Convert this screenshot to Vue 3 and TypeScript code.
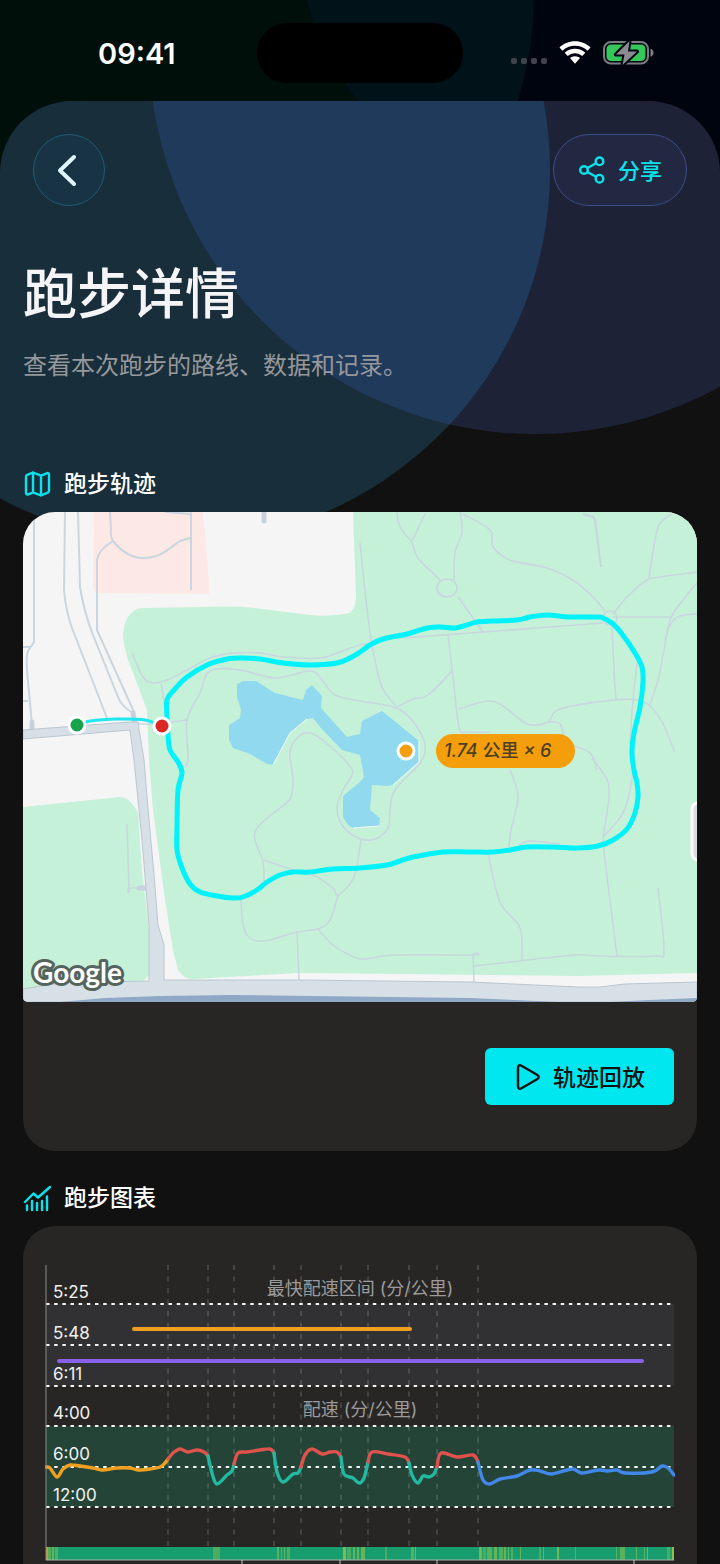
<script setup lang="ts">
type Point = [number, number]

function parse(list: string): Point[] {
  return list
    .trim()
    .split(/\s+/)
    .map((pair) => pair.split(',').map(Number) as Point)
}

/** Catmull-Rom curve through the listed points, as SVG cubic segments. */
function smooth(list: string, closed = false): string {
  const p = parse(list)
  const n = p.length
  const at = (i: number): Point => (closed ? p[(i + n) % n] : p[Math.max(0, Math.min(n - 1, i))])
  let d = `M${p[0][0]} ${p[0][1]}`
  const last = closed ? n : n - 1
  for (let i = 0; i < last; i++) {
    const [a, b, c, e] = [at(i - 1), at(i), at(i + 1), at(i + 2)]
    d += `C${b[0] + (c[0] - a[0]) / 6} ${b[1] + (c[1] - a[1]) / 6} ${c[0] - (e[0] - b[0]) / 6} ${c[1] - (e[1] - b[1]) / 6} ${c[0]} ${c[1]}`
  }
  return closed ? d + 'Z' : d
}

const trails = [
  '132,653 143,677 153,683 167,680 187,670 210,658 233,653 260,653 283,657 320,658 345,650 360,645 375,644',
  '161,683 163,695 166,712',
  '138,724 165,724',
  '170,722 188,720',
  '186,767 188,755 187,720 200,693 210,671 240,670 275,678 310,671 322,680 335,695 360,701 380,704 400,710 415,724 425,745 420,763 395,790 390,810 388,828 375,839 358,838 342,825 337,807 343,790 352,775 349,765 325,742 310,733 298,737 290,752 293,780 290,799 272,814 257,828 255,840 263,862 264,882',
  '264,860 290,869 313,875 333,888 338,895 354,877 361,840',
  '338,895 330,920 318,929 297,932 265,941 250,938 243,925 241,900',
  '297,932 299,980',
  '318,929 333,945 360,959 393,955 473,955 473,955 474,983',
  '474,966 520,961 575,955 600,956 655,956 664,950 658,888',
  '488,853 500,902 520,928 522,960',
  '603,835 605,860 617,956',
  '510,770 518,797 511,830 509,847',
  '592,758 608,782 608,805 603,837',
  '632,765 632,780 623,813 603,837',
  '519,845 530,841 560,844',
  '360,543 366,600 372,645 382,687 397,707',
  '397,707 413,699 428,695 452,671',
  '448,635 453,677 459,727 467,732 490,732',
  '459,709 487,701 503,706 527,724 548,722 560,709 613,700 637,700 650,706 662,722 675,752',
  '548,722 560,724 567,742 590,753 597,770',
  '403,638 483,632 603,623',
  '612,624 614,670 616,700',
  '638,655 634,690 632,712 630,745',
  '397,512 400,527 412,543 418,558 440,580',
  '425,514 412,541',
  '460,512 462,532 455,553 454,580',
  '458,597 483,632',
  '463,514 490,530 493,547 510,560 547,568 573,580 593,597 605,611',
  '672,514 660,523 655,540 649,578',
  '697,572 660,577 647,580 627,597 613,614',
  '613,617 672,617',
  '697,583 683,600 670,620 664,650 658,680 650,705',
  '697,614 680,616 670,625 665,640',
  '127,824 129,888 129,888 146,888',
].map((t) => smooth(t))

const streets = [
  'M34 512V642L28 651Q26 655 27 670L32 725',
  'M23 647H31',
  'M23 701H28',
  'M65 512L64 590Q66 612 72 628L107 718',
  'M78 512L80 587Q84 612 93 635L118 697Q121 706 133 713',
  'M113 541Q98 550 97 560V630L134 712',
  'M110 512L111 530Q110 536 113 541C122 552 131 558 143 558C163 558 171 546 180 541L190 538',
  'M191 512V590',
  'M165 512L191 514',
]

const loop = smooth(
  '167,718 167,700 174,690 187,677 207,665 227,659 243,658 260,659 283,663 310,665 337,663 350,658 360,652 370,645 383,639 407,634 427,628 441,627 455,628 467,625 477,622 493,621 517,620 530,617 547,615 570,617 597,617 603,618 612,623 622,634 635,653 642,667 643,682 640,707 634,733 632,753 634,770 637,783 638,797 635,813 627,829 613,840 598,846 577,848 553,847 527,847 510,850 493,852 470,852 443,852 413,857 400,861 387,865 360,868 333,869 310,872 293,872 280,875 267,882 257,890 243,897 233,898 217,896 200,892 190,884 182,868 177,850 177,827 178,790 182,773 178,762 170,750 168,735',
  true,
)
const approach = smooth('77,725 90,721 117,719 145,720 162,726')

const lake =
  '237,684 243,681 256,681 275,693 303,700 306,690 312,685 322,696 321,708 347,737 360,734 362,721 382,711 419,741 419,762 393,785 387,786 372,785 370,810 380,818 379,826 353,828 348,825 343,817 343,796 360,782 364,777 360,755 342,750 320,727 313,718 307,719 290,733 273,765 267,764 250,754 233,748 229,740 229,725 240,718 241,710 237,697'

const pace = [
  { color: '#f0a020', pts: '46,1467 50,1468 57,1477 63,1469 70,1465 80,1466 93,1468 102,1470 117,1468 130,1468 138,1470 150,1469 160,1467 165,1463 168,1459' },
  { color: '#e0524c', pts: '168,1459 173,1453 180,1449 188,1452 197,1450 204,1452 208,1456' },
  { color: '#22b8a2', pts: '208,1456 212,1473 217,1484 227,1475 232,1471 234,1464' },
  { color: '#e0524c', pts: '234,1464 238,1453 247,1452 260,1450 270,1449 274,1453' },
  { color: '#22b8a2', pts: '274,1453 277,1472 283,1482 293,1474 298,1473 301,1467' },
  { color: '#e0524c', pts: '301,1467 305,1455 312,1449 322,1454 330,1452 337,1452 341,1457' },
  { color: '#22b8a2', pts: '341,1457 344,1474 353,1478 359,1483 364,1478 368,1462' },
  { color: '#e0524c', pts: '368,1462 372,1452 388,1454 405,1457 409,1463' },
  { color: '#22b8a2', pts: '409,1463 412,1475 418,1483 423,1476 429,1477 434,1474 437,1467' },
  { color: '#e0524c', pts: '437,1467 441,1453 457,1457 473,1455 478,1462' },
  { color: '#4287ea', pts: '478,1462 483,1480 490,1484 500,1479 517,1476 530,1470 540,1471 552,1474 572,1469 582,1473 598,1470 608,1471 617,1470 625,1473 652,1472 662,1466 668,1468 674,1475' },
].map((s) => ({ color: s.color, d: smooth(s.pts) }))

const gridLines = [1304, 1345, 1386, 1426, 1467, 1507]
const yLabels = [
  { text: '5:25', y: 1298 },
  { text: '5:48', y: 1339 },
  { text: '6:11', y: 1380 },
  { text: '4:00', y: 1419 },
  { text: '6:00', y: 1460 },
  { text: '12:00', y: 1501 },
]
const lapLines = [168, 208, 234, 274, 301, 341, 368, 409, 437, 478]
const ticks = [242, 340, 437, 634]

const stripes: { x: number; w: number; o: number }[] = [
  { x: 48, w: 3, o: 0.45 }, { x: 52, w: 2, o: 0.6 }, { x: 55, w: 3, o: 0.45 },
  { x: 213, w: 7, o: 0.4 }, { x: 277, w: 2, o: 0.5 }, { x: 281, w: 1, o: 0.5 },
  { x: 284, w: 1, o: 0.6 }, { x: 287, w: 3, o: 0.4 }, { x: 343, w: 3, o: 0.8 },
  { x: 347, w: 4, o: 0.4 }, { x: 353, w: 2, o: 0.6 }, { x: 357, w: 2, o: 0.6 },
  { x: 361, w: 4, o: 0.6 }, { x: 385, w: 2, o: 0.4 }, { x: 411, w: 3, o: 0.5 },
  { x: 415, w: 1, o: 0.7 }, { x: 479, w: 3, o: 0.7 }, { x: 483, w: 3, o: 0.4 },
  { x: 487, w: 5, o: 0.5 }, { x: 494, w: 3, o: 0.6 }, { x: 499, w: 4, o: 0.45 },
  { x: 504, w: 2, o: 0.6 }, { x: 508, w: 1, o: 0.6 }, { x: 511, w: 2, o: 0.4 },
  { x: 520, w: 1, o: 0.6 }, { x: 539, w: 2, o: 0.4 }, { x: 543, w: 1, o: 0.6 },
  { x: 557, w: 2, o: 0.7 }, { x: 575, w: 1, o: 0.5 }, { x: 616, w: 1, o: 0.5 },
  { x: 620, w: 5, o: 0.5 }, { x: 636, w: 1, o: 0.6 }, { x: 644, w: 1, o: 0.5 },
  { x: 647, w: 1, o: 0.7 }, { x: 667, w: 3, o: 0.4 }, { x: 672, w: 2, o: 0.9 },
]
</script>

<template>
  <div class="screen">
    <svg class="backdrop" viewBox="0 0 720 101" aria-hidden="true">
      <defs>
        <clipPath id="back-clip"><circle cx="198" cy="-3" r="336" /></clipPath>
      </defs>
      <circle cx="198" cy="-3" r="336" fill="#000f09" />
      <circle cx="637" cy="-104" r="347" fill="#00040f" />
      <rect x="620" width="100" height="101" fill="#00040f" />
      <circle cx="637" cy="-104" r="347" fill="#021219" clip-path="url(#back-clip)" />
    </svg>

    <header class="status">
      <time class="clock">09:41</time>
      <span class="island"></span>
      <div class="indicators">
        <span class="dots"><i v-for="n in 4" :key="n"></i></span>
        <svg class="wifi" viewBox="0 0 32 23" role="img" aria-label="Wi-Fi">
          <path d="M16 0.3C22.1 0.3 27.6 2.7 31.5 6.5L28.5 9.8C25.2 6.6 20.8 4.8 16 4.8S6.8 6.6 3.5 9.8L.5 6.5C4.4 2.7 9.9.3 16 .3Z" />
          <path d="M16 7.7c4 0 7.6 1.5 10.3 4.1l-3.1 3.3c-1.9-1.8-4.4-2.9-7.2-2.9s-5.3 1.1-7.2 2.9l-3.1-3.3C8.4 9.2 12 7.7 16 7.7Z" />
          <path d="M16 15.2c2 0 3.7.7 5 1.9L16 22.7l-5-5.6c1.3-1.2 3-1.9 5-1.9Z" />
        </svg>
        <svg class="battery" viewBox="0 0 51 26" role="img" aria-label="正在充电">
          <rect x="1" y="2" width="44" height="21.5" rx="7" fill="none" stroke="#7b7d82" stroke-width="2" />
          <rect x="3.5" y="4.5" width="39" height="16.5" rx="4.5" fill="#35c759" />
          <path d="M47.5 8.8c2 .6 3 2 3 4s-1 3.4-3 4Z" fill="#7b7d82" />
          <path d="M26.5 1L13 14.5h8.5L19.5 25L34 11.5h-9Z" fill="#8b8c92" stroke="#00040f" stroke-width="4" stroke-linejoin="round" paint-order="stroke" />
        </svg>
      </div>
    </header>

    <main class="sheet">
      <svg class="glow" viewBox="0 0 720 463" aria-hidden="true">
        <defs>
          <clipPath id="glow-clip"><circle cx="177" cy="69" r="373" /></clipPath>
        </defs>
        <circle cx="177" cy="69" r="373" fill="#182e3a" />
        <circle cx="535" cy="-53" r="386" fill="#1e2236" />
        <circle cx="535" cy="-53" r="386" fill="#203a5b" clip-path="url(#glow-clip)" />
      </svg>

      <nav class="toolbar">
        <button class="back" type="button" aria-label="返回">
          <svg viewBox="0 0 22 34" aria-hidden="true"><path d="M18 4L4 17.5L18 31" /></svg>
        </button>
        <button class="share" type="button">
          <svg viewBox="0 0 26 28" aria-hidden="true">
            <circle cx="5" cy="14" r="3.8" />
            <circle cx="20.5" cy="5.3" r="3.8" />
            <circle cx="20.5" cy="22.7" r="3.8" />
            <path d="M8.5 12L17 7.2M8.5 16L17 20.8" />
          </svg>
          <span>分享</span>
        </button>
      </nav>

      <div class="intro">
        <h1>跑步详情</h1>
        <p>查看本次跑步的路线、数据和记录。</p>
      </div>

      <section class="block">
        <h2>
          <svg class="section-icon" viewBox="0 0 28 28" aria-hidden="true">
            <path d="M10 2.5L4.2 4.9Q3 5.4 3 6.8V22.5Q3 25.2 5.4 24.3L10 22.3L18 25.5L24.8 22.7Q26 22.2 26 20.8V5Q26 2.3 23.6 3.3L18 5.7ZM10 2.5V22.3M18 5.7V25.5" />
          </svg>
          跑步轨迹
        </h2>
        <div class="card map-card">
          <svg class="map" viewBox="23 512 674 490" role="img" aria-label="跑步轨迹地图">
            <rect x="23" y="512" width="674" height="490" fill="#f6f5f6" />
            <path d="M94 512H203L205 535L209 583V594L98 593Q93 592 93 585Z" fill="#fce8e5" />
            <path d="M353 512L356 595Q356 613 345 614Q325 617 310 615L245 607Q225 606 200 607L142 608Q125 610 123 635Q124 650 130 665L147 710L149 760L153 810L165 900L173 950L178 970Q184 979 192 979L300 973L400 974L580 976L697 973V512Z" fill="#c5f1d8" />
            <path d="M23 807L120 797Q130 797 138 813L142 870L149 930V975L143 981L23 990Z" fill="#c5f1d8" />
            <g class="streets"><path v-for="s in streets" :key="s" :d="s" /></g>
            <path d="M264 512V521" stroke="#c6d2dd" stroke-width="5" stroke-linecap="round" />
            <path d="M32 722V730M133 713L135 726M139 888H146" stroke="#c6d2dd" stroke-width="5" stroke-linecap="round" />
            <g class="trails">
              <path v-for="t in trails" :key="t" :d="t" />
              <ellipse cx="447" cy="588" rx="10" ry="9" />
              <ellipse cx="610" cy="618" rx="7" ry="7" />
            </g>
            <path d="M583 514L593 517Q596 520 596 527L601 567" fill="none" stroke="#c5d6dd" stroke-width="2" />
            <path d="M23 730L130 722L138 722L140 735L144 760L149 820L154 875L158 925L164 945V980L300 980L470 982L578 987H600L625 984L697 982V1002H23V989L60 983L149 981V925L142 840L134 760L130 730L23 739Z" fill="#d7e0e7" stroke="#bac6d1" />
            <path d="M60 1002L105 998L160 996L230 995L470 998L560 1002ZM610 1002L650 1000L697 998V1002Z" fill="#8fa8c5" />
            <polygon :points="lake" fill="#90d9ee" />
            <path d="M273 765L290 733L307 719M393 785L419 762V741M353 828L379 826" fill="none" stroke="#f4faf6" />
            <path class="route thin" :d="approach" />
            <path class="route" :d="loop" />
            <g stroke="#fff" stroke-width="3">
              <circle cx="77" cy="725" r="8" fill="#17a34a" />
              <circle cx="162" cy="726" r="8" fill="#dc2626" />
              <circle cx="406" cy="751" r="8" fill="#f59e0b" />
            </g>
            <rect x="436" y="734" width="139" height="34" rx="17" fill="#f59e0b" />
            <text class="badge" x="444" y="757">1.74 <tspan class="unit">公里</tspan> × 6</text>
            <rect x="692" y="803" width="20" height="57" rx="6" fill="#d8dde0" stroke="#fdfdfd" stroke-width="3" />
            <text class="google" x="33" y="983">Google</text>
          </svg>
          <div class="actions">
            <button class="replay" type="button">
              <svg viewBox="0 0 26 28" aria-hidden="true">
                <path d="M3 5V23Q3 27 6.5 25.2L22 16.3Q25.5 14 22 11.7L6.5 2.8Q3 1 3 5Z" />
              </svg>
              <span>轨迹回放</span>
            </button>
          </div>
        </div>
      </section>

      <section class="block grow">
        <h2>
          <svg class="section-icon" viewBox="0 0 28 28" aria-hidden="true">
            <path d="M2 18L10.5 9.5L15 13.5L27 3M4 21.5V26M9 17V26M14 19V26M19 17V26M24 12.5V26" />
          </svg>
          跑步图表
        </h2>
        <div class="card chart-card">
          <svg class="chart" viewBox="45 1265 630 299" role="img" aria-label="跑步图表">
            <rect x="46" y="1304" width="628" height="82" fill="#313033" />
            <rect x="46" y="1426" width="628" height="81" fill="#234437" />
            <g class="laps"><path v-for="x in lapLines" :key="x" :d="`M${x} 1265V1547`" /></g>
            <g class="grid-lines"><path v-for="y in gridLines" :key="y" :d="`M46 ${y}H674`" /></g>
            <path d="M134 1329H410" stroke="#f0a020" stroke-width="4" stroke-linecap="round" />
            <path d="M59 1361H642" stroke="#8960e8" stroke-width="4" stroke-linecap="round" />
            <path v-for="s in pace" :key="s.d" class="pace" :d="s.d" :stroke="s.color" />
            <g class="y-labels">
              <text v-for="l in yLabels" :key="l.text" x="53" :y="l.y">{{ l.text }}</text>
            </g>
            <g class="chart-titles">
              <text x="360" y="1295">最快配速区间 (分/公里)</text>
              <text x="360" y="1416">配速 (分/公里)</text>
            </g>
            <rect x="46" y="1547" width="628" height="13" fill="#189e6e" />
            <rect x="46" y="1547" width="2" height="13" fill="#d99a1c" />
            <rect v-for="s in stripes" :key="s.x" :x="s.x" y="1547" :width="s.w" height="13" fill="#9cc24a" :opacity="s.o" />
            <path d="M46 1265V1560" stroke="#8c8b8a" />
            <path d="M46 1560H674" stroke="#a9b5ae" />
            <path v-for="x in ticks" :key="x" :d="`M${x} 1560V1564`" stroke="#c4c4c4" />
          </svg>
        </div>
      </section>
    </main>
  </div>
</template>

<style>
body {
  background: #000;
}
</style>

<style scoped>
.screen {
  position: relative;
  display: flex;
  flex-direction: column;
  min-height: 100vh;
  overflow: hidden;
  background: #000;
  color: #fff;
  font-family: Inter, "Noto Sans CJK SC", sans-serif;
}
.backdrop {
  position: absolute;
  top: 0;
  left: 0;
  width: 100%;
  overflow: visible;
}
.status {
  position: relative;
  display: grid;
  grid-template-columns: 1fr 206px 1fr;
  align-items: center;
  height: 101px;
  box-sizing: border-box;
  padding-top: 4px;
}
.clock {
  padding: 2px 0 0 98px;
  font-size: 29px;
  line-height: 36px;
  font-weight: 600;
}
.island {
  height: 60px;
  border-radius: 30px;
  background: #000;
}
.indicators {
  display: flex;
  justify-content: flex-end;
  align-items: center;
  gap: 12px;
  padding-right: 66px;
}
.dots {
  display: flex;
  gap: 4px;
  padding-top: 16px;
}
.dots i {
  width: 6px;
  height: 6px;
  border-radius: 2px;
  background: #3f434b;
}
.wifi {
  width: 32px;
  height: 23px;
  fill: #fff;
}
.battery {
  width: 51px;
  height: 26px;
}
.sheet {
  position: relative;
  display: flex;
  flex-direction: column;
  flex: 1;
  padding: 33px 23px 0;
  overflow: hidden;
  border-radius: 72px 72px 0 0;
  background: #111;
}
.glow {
  position: absolute;
  top: 0;
  left: 0;
  width: 100%;
  overflow: hidden;
}
.toolbar,
.intro,
.block {
  position: relative;
}
.toolbar {
  display: flex;
  justify-content: space-between;
  padding: 0 10px;
}
button {
  display: flex;
  align-items: center;
  justify-content: center;
  border: 0;
  font: inherit;
  font-size: 23px;
  font-weight: 500;
  line-height: 32px;
  cursor: pointer;
}
button svg {
  fill: none;
  stroke: currentColor;
  stroke-linecap: round;
  stroke-linejoin: round;
}
button span {
  padding-top: 2px;
}
.back {
  width: 72px;
  height: 72px;
  padding: 0 5px 0 0;
  border: 1px solid #1e5c78;
  border-radius: 36px;
  background: #183444;
  color: #dff6ff;
}
.back svg {
  width: 22px;
  height: 34px;
  stroke-width: 4;
}
.share {
  height: 72px;
  padding: 0 24px 0 25px;
  gap: 13px;
  border: 1px solid #3b4f86;
  border-radius: 36px;
  background: #222842;
  color: #0be3ec;
  font-size: 22px;
}
.share svg {
  width: 26px;
  height: 28px;
  stroke-width: 2.4;
}
h1,
h2,
p {
  margin: 0;
}
.intro {
  padding-top: 57px;
}
h1 {
  color: #f5f5f7;
  font-size: 54px;
  font-weight: 500;
  line-height: 64px;
}
.intro p {
  margin-top: 23px;
  color: #96989b;
  font-size: 24px;
  font-weight: 400;
  line-height: 32px;
}
.block {
  padding-top: 31px;
}
.intro + .block {
  padding-top: 86px;
}
.grow {
  display: flex;
  flex-direction: column;
  flex: 1;
}
h2 {
  display: flex;
  align-items: center;
  gap: 13px;
  font-size: 23px;
  font-weight: 500;
  line-height: 32px;
}
.section-icon {
  width: 28px;
  height: 28px;
  fill: none;
  stroke: #0be3ec;
  stroke-width: 2.4;
  stroke-linecap: round;
  stroke-linejoin: round;
}
.card {
  margin-top: 12px;
  border-radius: 32px;
  background: #282624;
}
.map {
  display: block;
  width: 100%;
  border-radius: 32px 32px 5px 5px;
}
.streets {
  fill: none;
  stroke: #c9d6e0;
  stroke-width: 2;
}
.trails {
  fill: none;
  stroke: #c8d6df;
  stroke-width: 1.5;
}
.route {
  fill: none;
  stroke: #00f2fb;
  stroke-width: 5;
  stroke-linecap: round;
}
.thin {
  stroke: #20e6ef;
  stroke-width: 3;
}
.badge {
  fill: #4b4023;
  font-size: 18px;
  font-weight: 500;
  font-style: italic;
  white-space: pre;
}
.unit {
  font-style: normal;
}
.google {
  fill: #fff;
  stroke: #55655d;
  stroke-width: 6;
  stroke-linejoin: round;
  paint-order: stroke;
  font-family: Lato, sans-serif;
  font-size: 28px;
  font-weight: 700;
}
.actions {
  display: flex;
  justify-content: flex-end;
  padding: 46px 23px;
}
.replay {
  height: 57px;
  padding: 0 29px 0 30px;
  gap: 12px;
  border-radius: 6px;
  background: #00e7f0;
  color: #111;
}
.replay svg {
  width: 26px;
  height: 28px;
  stroke-width: 2.4;
}
.chart-card {
  flex: 1;
  padding: 39px 22px 0;
  border-radius: 32px 32px 0 0;
}
.chart {
  display: block;
  width: 100%;
}
.laps {
  stroke: #fff;
  stroke-opacity: 0.28;
  stroke-width: 1;
  stroke-dasharray: 5 6.5;
}
.grid-lines {
  stroke: #f4f4f4;
  stroke-width: 2;
  stroke-dasharray: 3.5 4.67;
}
.pace {
  fill: none;
  stroke-width: 3.4;
  stroke-linecap: round;
}
.y-labels {
  fill: #f2f2f2;
  font-size: 17px;
}
.chart-titles {
  fill: #9b9b9d;
  font-size: 18px;
  text-anchor: middle;
}
</style>
